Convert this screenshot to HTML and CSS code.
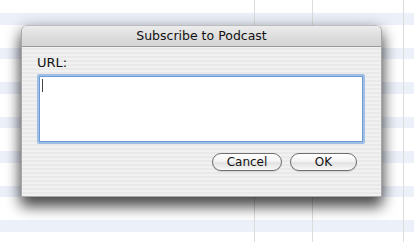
FILE: index.html
```html
<!DOCTYPE html>
<html>
<head>
<meta charset="utf-8">
<link rel="stylesheet" href="styles.css">
</head>
<body>
<div class="list">
  <div class="col c1"></div>
  <div class="col c2"></div>
  <div class="col c3"></div>
  <div class="col c4"></div>
</div>
<div class="sheet">
  <div class="titlebar">Subscribe to Podcast</div>
  <div class="content">
    <div class="label">URL:</div>
    <div class="field"><span class="caret"></span></div>
    <div class="buttons">
      <button class="btn cancel">Cancel</button>
      <button class="btn ok">OK</button>
    </div>
  </div>
</div>
</body>
</html>
```

FILE: styles.css
```css
html, body {
  margin: 0;
  padding: 0;
  width: 414px;
  height: 242px;
  overflow: hidden;
  font-family: "DejaVu Sans", "Liberation Sans", sans-serif;
}
body {
  position: relative;
}
.list {
  display: grid;
  grid-template-columns: 255px 58px 91px 10px;
  height: 242px;
  background: repeating-linear-gradient(to bottom,
    #ffffff 0px, #ffffff 13.5px,
    #ebf0f9 13.5px, #ebf0f9 25px,
    #ffffff 25px, #ffffff 34.5px);
}
.col {
  border-right: 1px solid #dcdcdc;
}
.c4 { border-right: none; }

.sheet {
  position: absolute;
  left: 21px;
  top: 25px;
  width: 361px;
  height: 172px;
  box-sizing: border-box;
  border: 1px solid #a8a8a8;
  border-top-color: #bdbdbd;
  border-radius: 6px 6px 0 0;
  background: repeating-linear-gradient(to bottom,
    #f1f1f1 0px, #f1f1f1 2px, #e9e9e9 2px, #e9e9e9 4px);
  box-shadow: 0 10px 14px rgba(0,0,0,0.6), 0 3px 16px rgba(0,0,0,0.35);
  display: flex;
  flex-direction: column;
}
.titlebar {
  height: 20px;
  line-height: 20px;
  border-bottom: 1px solid #9a9a9a;
  border-radius: 5px 5px 0 0;
  background: linear-gradient(to bottom, #ececec, #dedede 50%, #d4d4d4);
  text-align: center;
  font-size: 12.5px;
  color: #111;
}
.content {
  padding: 8px 16px 0 15px;
  display: flex;
  flex-direction: column;
}
.label {
  font-size: 13px;
  line-height: 15px;
  color: #111;
}
.field {
  margin-top: 4px;
  height: 70px;
  box-sizing: border-box;
  background: #fff;
  border: 2px solid #9fbfe6;
  box-shadow: inset 0 0 0 1px #6f9bd0;
  border-radius: 2px;
  padding: 3px 0 0 3px;
}
.caret {
  display: block;
  width: 1px;
  height: 13px;
  background: #444;
}
.buttons {
  margin-top: 9px;
  margin-right: 8px;
  display: flex;
  justify-content: flex-end;
  gap: 8px;
}
.btn {
  height: 18px;
  box-sizing: border-box;
  border: 1px solid #6e6e6e;
  border-radius: 9px;
  background: linear-gradient(to bottom, #ffffff 0%, #f4f4f4 45%, #e2e2e2 55%, #f0f0f0 85%, #fbfbfb 100%);
  font-family: "DejaVu Sans", "Liberation Sans", sans-serif;
  font-size: 12px;
  line-height: 16px;
  padding: 0;
  color: #111;
  box-shadow: 0 1px 1px rgba(0,0,0,0.12);
}
.cancel { width: 70px; }
.ok { width: 67px; }
```
